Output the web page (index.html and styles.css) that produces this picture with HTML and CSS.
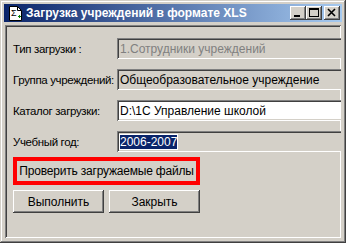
FILE: index.html
```html
<!DOCTYPE html>
<html lang="ru">
<head>
<meta charset="UTF-8">
<title>Загрузка учреждений в формате XLS</title>
<link rel="stylesheet" href="styles.css">
</head>
<body>
<div class="window">
    <!-- Title bar -->
    <div class="titlebar">
        <svg class="app-icon" width="13" height="15" viewBox="0 0 13 15">
            <path d="M0.5 0.5h8l4 4v10h-12z" fill="#fff" stroke="#000"/>
            <path d="M8.5 0.5v4h4" fill="none" stroke="#000"/>
            <text x="2" y="10" font-family="Liberation Sans, sans-serif" font-size="9" fill="#000">Σ</text>
            <path d="M9 10h3v1h-3zM10 9h1v3h-1z" fill="#008000"/>
        </svg>
        <span class="title">Загрузка учреждений в формате XLS</span>
        <div class="caption-buttons">
            <div class="cap-btn">
                <svg width="16" height="14" viewBox="0 0 16 14"><rect x="4" y="9" width="6" height="2" fill="#000"/></svg>
            </div>
            <div class="cap-btn">
                <svg width="16" height="14" viewBox="0 0 16 14"><path d="M3.5 2.5h9v8h-9z" fill="none" stroke="#000"/><rect x="3" y="3" width="10" height="1" fill="#000"/></svg>
            </div>
            <div class="cap-btn close">
                <svg width="16" height="14" viewBox="0 0 16 14"><path d="M4 3l7 7M11 3l-7 7" stroke="#000" stroke-width="1.6"/></svg>
            </div>
        </div>
    </div>

    <!-- Form panel -->
    <div class="panel">
        <div class="row">
            <span class="label">Тип загрузки :</span>
            <div class="field disabled">1.Сотрудники учреждений</div>
        </div>
        <div class="row">
            <span class="label">Группа учреждений:</span>
            <div class="field">Общеобразовательное учреждение</div>
        </div>
        <div class="row">
            <span class="label">Каталог загрузки:</span>
            <div class="field white">D:\1С Управление школой</div>
        </div>
        <div class="row">
            <span class="label">Учебный год:</span>
            <div class="field"><span class="selected">2006-2007</span></div>
        </div>

        <div class="check-files">Проверить загружаемые файлы</div>

        <div class="actions">
            <div class="btn">Выполнить</div>
            <div class="btn">Закрыть</div>
        </div>
    </div>
</div>
</body>
</html>
```

FILE: styles.css
```css
body {
    margin: 0;
    background-color: #d4d0c8;
    font-family: "Liberation Sans", Arial, sans-serif;
    font-size: 11px;
    color: #000;
    overflow: hidden;
}
.window {
    width: 346px;
    height: 243px;
    box-sizing: border-box;
    padding: 4px;
    background-color: #d4d0c8;
    box-shadow: inset -1px -1px #404040, inset 1px 1px #d4d0c8, inset -2px -2px #808080, inset 2px 2px #fff;
    display: flex;
    flex-direction: column;
}
.titlebar {
    height: 18px;
    display: flex;
    align-items: center;
    background: linear-gradient(to right, #0a246a, #a6caf0);
    padding-left: 5px;
}
.app-icon {
    flex: none;
}
.title {
    margin-left: 4px;
    color: #fff;
    font-weight: bold;
    font-size: 12px;
    white-space: nowrap;
}
.caption-buttons {
    margin-left: auto;
    margin-right: 2px;
    display: flex;
}
.cap-btn {
    width: 16px;
    height: 14px;
    background-color: #d4d0c8;
    box-shadow: inset -1px -1px #404040, inset 1px 1px #fff, inset -2px -2px #808080;
}
.cap-btn svg {
    display: block;
    shape-rendering: crispEdges;
}
.cap-btn.close {
    margin-left: 2px;
}
.cap-btn.close svg {
    shape-rendering: auto;
}
.panel {
    flex: 1;
    margin: 3px 1px 1px 1px;
    padding: 13px 0 0 8px;
    overflow: hidden;
    box-shadow: inset 1px 1px #808080, inset -1px -1px #fff, inset 2px 2px #404040, inset -2px -2px #d4d0c8;
}
.row {
    display: flex;
    align-items: center;
    height: 21px;
    margin-bottom: 10px;
}
.row:nth-child(4) {
    margin-bottom: 5px;
}
.label {
    width: 104px;
    flex: none;
    white-space: nowrap;
    font-size: 11.5px;
    letter-spacing: -0.35px;
}
.field {
    flex: 1;
    height: 21px;
    margin-right: -10px;
    box-sizing: border-box;
    padding: 4px 0 0 3px;
    white-space: nowrap;
    font-size: 12px;
    line-height: 14px;
    background-color: #d4d0c8;
    box-shadow: inset 1px 1px #808080, inset -1px -1px #fff, inset 2px 2px #404040, inset -2px -2px #d4d0c8;
}
.field.disabled {
    color: #808080;
}
.field.white {
    background-color: #fff;
}
.selected {
    background-color: #0a246a;
    color: #fff;
    outline: 1px solid #fff;
}
.check-files {
    width: 187px;
    height: 28px;
    box-sizing: border-box;
    border: 4px solid #ff0000;
    display: flex;
    align-items: center;
    justify-content: center;
    white-space: nowrap;
    font-size: 12px;
    letter-spacing: -0.2px;
}
.actions {
    display: flex;
    gap: 5px;
    margin-top: 5px;
}
.btn {
    width: 91px;
    height: 23px;
    display: flex;
    align-items: center;
    justify-content: center;
    font-size: 12px;
    box-shadow: inset -1px -1px #404040, inset 1px 1px #fff, inset -2px -2px #808080;
}
```
